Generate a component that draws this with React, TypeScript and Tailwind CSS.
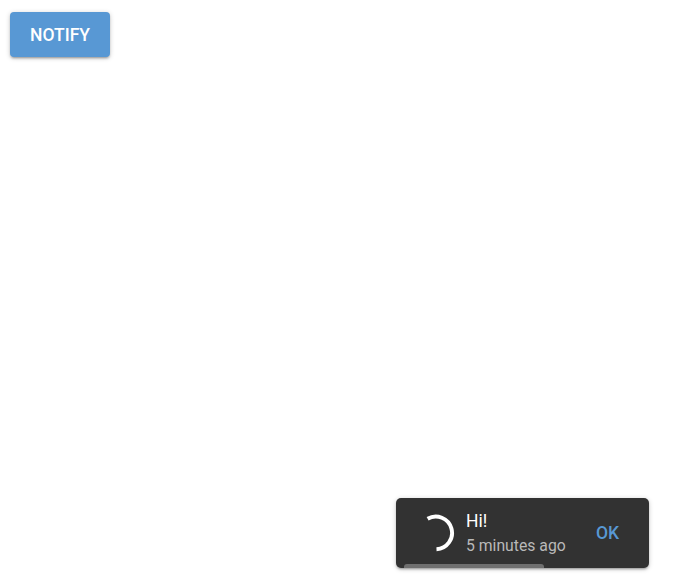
export default function App() {
  return (
    <main className="flex h-[577px] w-full flex-col items-start justify-between overflow-hidden bg-white pl-[10px] pr-[26px] pt-3 pb-[9px] font-['Roboto',sans-serif]">
      <button className="h-[45px] w-[100px] rounded-[4px] bg-[#5898d4] pt-[2px] text-[17.5px] font-medium text-white shadow-[0_1px_5px_rgba(0,0,0,0.2),0_2px_2px_rgba(0,0,0,0.14),0_3px_1px_-2px_rgba(0,0,0,0.12)]">
        NOTIFY
      </button>
      <section className="relative flex h-[70px] w-[253px] items-center self-end rounded-[5px] bg-[#323232] pl-5 text-white shadow-[0_1px_5px_rgba(0,0,0,0.2),0_2px_2px_rgba(0,0,0,0.14),0_3px_1px_-2px_rgba(0,0,0,0.12)]">
        <svg className="h-10 w-10 shrink-0" viewBox="0 0 40 40" fill="none">
          <path d="M11.6 5.8A16.3 16.3 0 1 1 20.5 36.2" stroke="white" strokeWidth="3.9" />
        </svg>
        <div className="ml-[10px] w-[130px] pb-px text-[17.5px]">
          <div className="leading-[26px]">Hi!</div>
          <div className="whitespace-nowrap text-[15.75px] leading-[23px] text-[#b9b9b9]">5 minutes ago</div>
        </div>
        <button className="text-[17.5px] font-medium text-[#5898d4]">OK</button>
        <div className="absolute bottom-0 left-2 h-1 w-[139.5px] rounded-t-[3px] bg-[#6f6f6f]" />
      </section>
    </main>
  );
}
